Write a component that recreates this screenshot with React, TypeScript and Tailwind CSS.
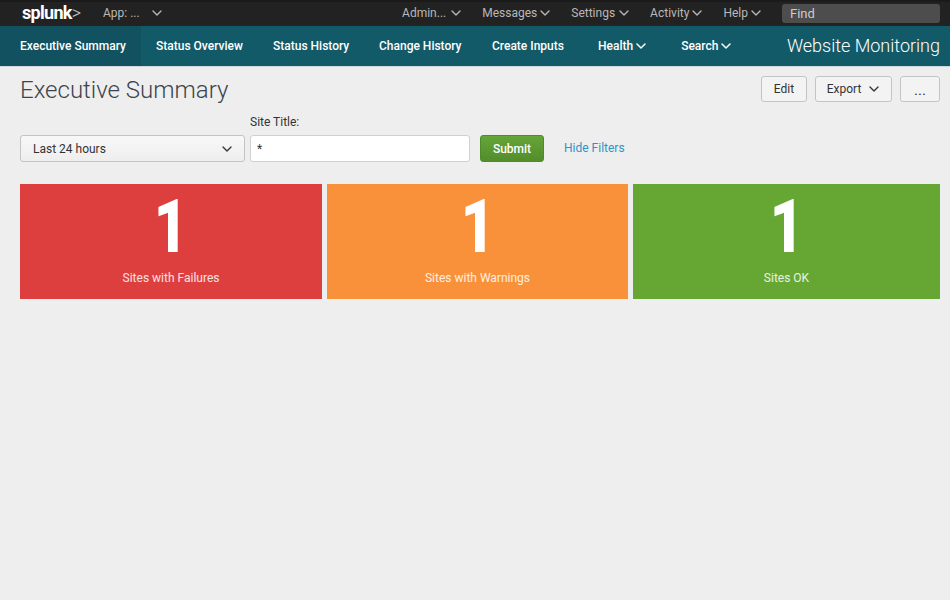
import { ChevronDown } from 'lucide-react'

const topLinks = [
  { label: 'Admin...', gap: 'ml-[2px]' },
  { label: 'Messages', gap: 'ml-0' },
  { label: 'Settings', gap: 'ml-[1px]' },
  { label: 'Activity', gap: 'ml-0' },
  { label: 'Help', gap: 'ml-0' },
]

const navLinks = [
  { label: 'Status Overview', className: 'ml-[15px] w-[87px]' },
  { label: 'Status History', className: 'ml-[30px] w-[77px]' },
  { label: 'Change History', className: 'ml-[29px] w-[84px]' },
  { label: 'Create Inputs', className: 'ml-[29px] w-[72px]' },
  { label: 'Health', className: 'ml-[34px]', caret: true },
  { label: 'Search', className: 'ml-[32px]', caret: true },
]

const tiles = [
  { label: 'Sites with Failures', color: 'bg-[#dc3f3e]' },
  { label: 'Sites with Warnings', color: 'bg-[#f9913a]' },
  { label: 'Sites OK', color: 'bg-[#66a734]' },
]

export default function App() {
  return (
    <div className="flex min-h-[600px] w-[950px] flex-col overflow-hidden bg-[#eeeeee] font-['Roboto',sans-serif] text-[#333333]">
      {/* Top bar */}
      <div className="flex h-[26px] items-center bg-[#222222] pr-[10px] pl-[22px] text-[12px] text-[#b8b8b8] shadow-[inset_0_2px_0_#1a1a1a]">
        <div className="flex w-[60px] items-center text-[18px] leading-none font-bold tracking-[-0.7px] text-white">
          splunk<span className="font-light text-[#c8c8c8]">&gt;</span>
        </div>
        <span className="ml-[21px] w-[38px] whitespace-nowrap">App: ...</span>
        <ChevronDown size={16} strokeWidth={2} className="ml-[8px]" />
        <div className="ml-auto flex items-center gap-[18px]">
          {topLinks.map((link) => (
            <div key={link.label} className="flex items-center">
              <span className="whitespace-nowrap">{link.label}</span>
              <ChevronDown size={16} strokeWidth={2} className={link.gap} />
            </div>
          ))}
        </div>
        <div className="mt-[1px] ml-[18px] flex h-[19px] w-[158px] items-center rounded-[3px] bg-[#4d4d4d] px-[8px] text-[13px] text-[#cccccc]">
          Find
        </div>
      </div>

      {/* App nav */}
      <div className="flex h-[41px] items-center border-b border-[#cfd8da] bg-[#135a69] pr-[10px] text-[12px] font-medium text-white">
        <div className="flex h-full w-[141px] items-center bg-[#115160] pl-[20px] whitespace-nowrap">Executive Summary</div>
        {navLinks.map((link) => (
          <div key={link.label} className={`flex items-center whitespace-nowrap ${link.className}`}>
            {link.label}
            {link.caret && <ChevronDown size={16} strokeWidth={2.25} />}
          </div>
        ))}
        <div className="ml-auto pb-[2px] text-[18px] font-light whitespace-nowrap">Website Monitoring</div>
      </div>

      {/* Title row */}
      <div className="flex items-start justify-between pt-[9px] pr-[10px] pl-[20px]">
        <h1 className="text-[24px] leading-[29px] font-light text-[#3c444d]">Executive Summary</h1>
        <div className="flex gap-[8px] text-[12px]">
          <button className="flex h-[26px] w-[46px] items-center justify-center rounded-[3px] border border-[#c4c4c4] bg-[#f3f3f3]">Edit</button>
          <button className="flex h-[26px] w-[77px] items-center justify-center gap-[5px] rounded-[3px] border border-[#c4c4c4] bg-[#f3f3f3] pl-[2px]">
            Export <ChevronDown size={16} strokeWidth={2} />
          </button>
          <button className="flex h-[26px] w-[40px] items-center justify-center rounded-[3px] border border-[#c4c4c4] bg-[#f3f3f3] pt-[3px] text-[15px]">...</button>
        </div>
      </div>

      {/* Filters */}
      <div className="flex items-end pt-[10px] pl-[20px]">
        <div className="flex h-[27px] w-[225px] items-center justify-between rounded-[3px] border border-[#c4c4c4] bg-linear-to-b from-[#f8f8f8] to-[#eeeeee] pr-[9px] pl-[12px] text-[12px]">
          Last 24 hours
          <ChevronDown size={16} strokeWidth={2} />
        </div>
        <div className="ml-[5px] flex flex-col">
          <label className="mb-[5px] text-[12px] leading-[15px]">Site Title:</label>
          <div className="flex h-[27px] w-[220px] items-center rounded-[3px] border border-[#d0d0d0] bg-white pl-[6px] text-[12px]">*</div>
        </div>
        <button className="ml-[10px] flex h-[27px] w-[64px] items-center justify-center rounded-[3px] border border-[#4f8a2b] bg-linear-to-b from-[#65a637] to-[#538d2c] text-[12px] font-medium text-white">Submit</button>
        <span className="ml-[20px] self-end pb-[5px] text-[12px] text-[#2e93c9]">Hide Filters</span>
      </div>

      {/* Single value tiles */}
      <div className="mt-[22px] grid grid-cols-[302px_301px_307px] gap-[5px] pl-[20px]">
        {tiles.map((tile) => (
          <div key={tile.label} className={`flex h-[115px] flex-col items-center ${tile.color} text-white`}>
            <div className="mt-[5px] scale-x-[0.78] text-[75px] leading-[75px] font-black">1</div>
            <div className="mt-[5px] text-[12px] leading-[18px] text-white/85">{tile.label}</div>
          </div>
        ))}
      </div>
    </div>
  )
}
